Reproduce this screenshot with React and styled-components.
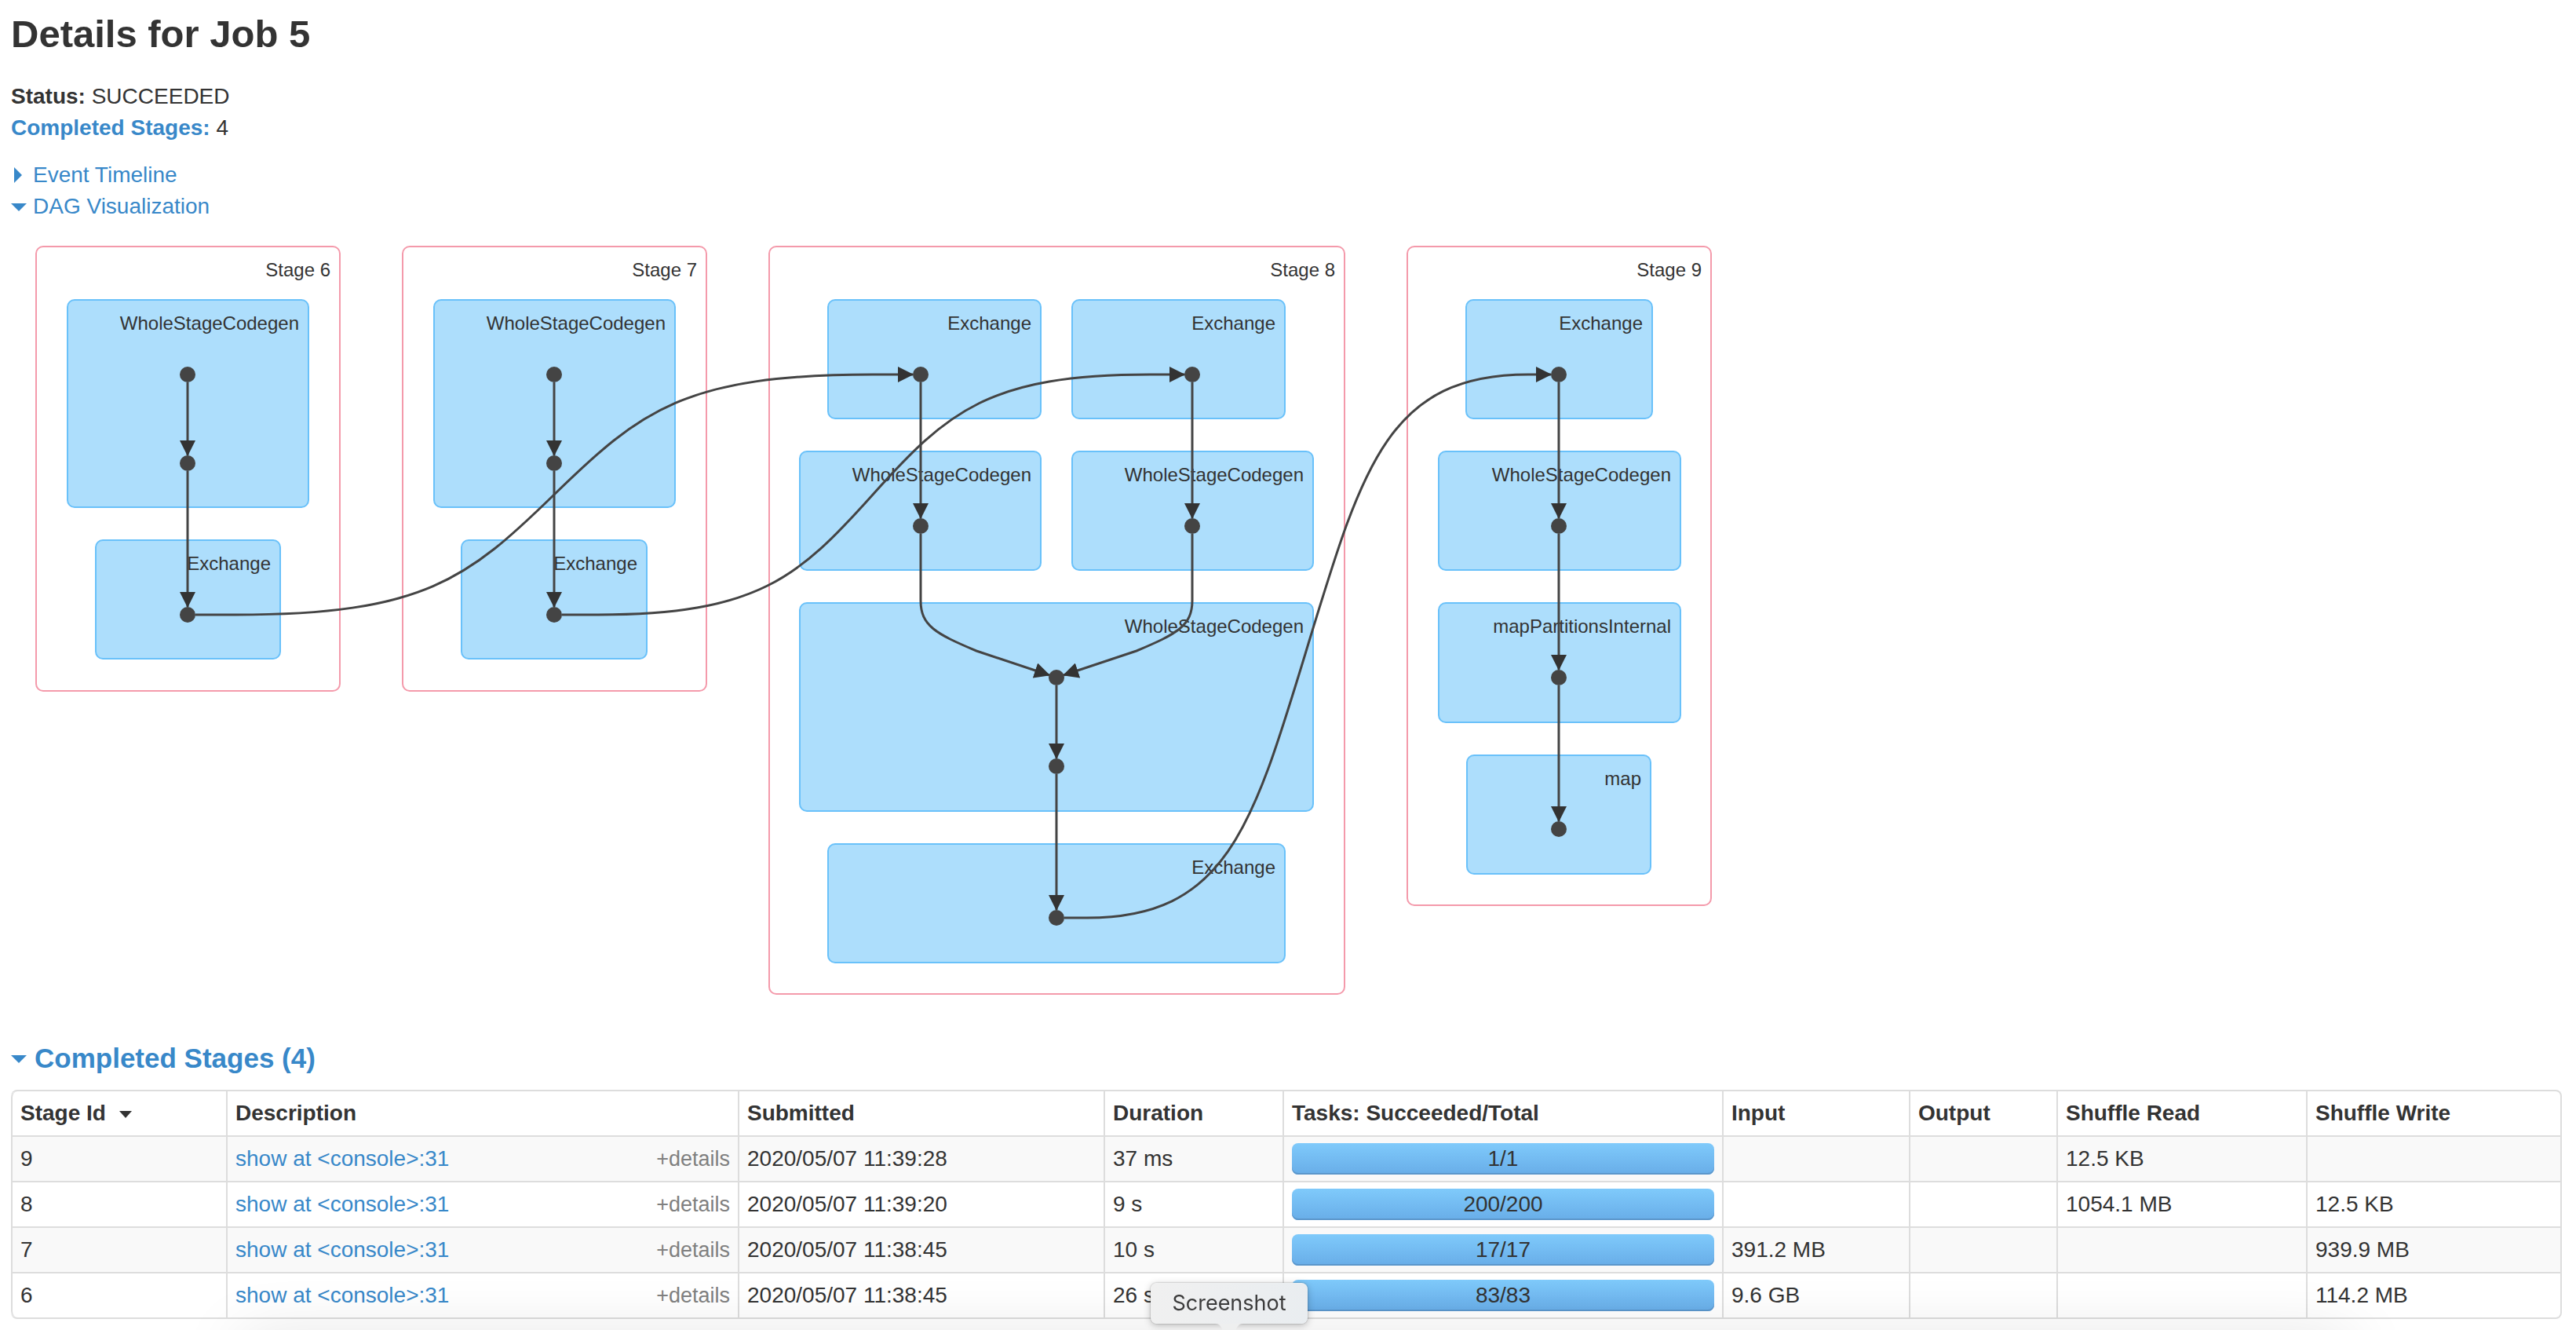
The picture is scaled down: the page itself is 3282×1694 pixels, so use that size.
import React from "react";
import styled, { createGlobalStyle } from "styled-components";

const GlobalStyle = createGlobalStyle`
  html { background: #fff; }
  body {
    margin: 0;
    color: #333;
    font: 28px/40px "Liberation Sans", Arial, sans-serif;
  }
`;

const LINK = "#3888c9";

const Page = styled.main`
  padding: 3px 18px 0 14px;
`;

const PageTitle = styled.h1`
  margin: 0 0 20px;
  font-size: 49px;
  line-height: 80px;
`;

const Summary = styled.ul`
  list-style: none;
  margin: 0 0 20px;
  padding: 0;
`;

const Link = styled.a`
  color: ${LINK};
  text-decoration: none;
`;

const Toggle = styled.button`
  display: flex;
  align-items: center;
  gap: ${(p) => (p.$wide ? 10 : 8)}px;
  padding: 0;
  border: 0;
  background: none;
  color: ${LINK};
  font: inherit;
  cursor: pointer;
`;

const CaretBox = styled.svg`
  display: block;
  flex: none;
  width: 20px;
  height: 20px;
  fill: currentColor;
`;

const Graph = styled.svg`
  display: block;
  margin-top: 29px;
`;

const StageBox = styled.rect`
  fill: #fff;
  stroke: #f49aab;
  stroke-width: 2px;
`;

const OperationBox = styled.rect`
  fill: #addefc;
  stroke: #69c1fa;
  stroke-width: 2px;
`;

const GraphLabel = styled.text`
  fill: #333;
  font-size: 24px;
  text-anchor: end;
`;

const Edge = styled.path`
  fill: none;
  stroke: #444;
  stroke-width: 3px;
`;

const Dot = styled.circle`
  fill: #444;
`;

const SectionTitle = styled.h2`
  margin: 61px 0 20px;
  font-size: 35px;
  line-height: 40px;
`;

const Table = styled.table`
  width: 100%;
  table-layout: fixed;
  border: 2px solid #ddd;
  border-left: 0;
  border-radius: 8px;
  border-collapse: separate;
  border-spacing: 0;

  thead th:first-child { border-top-left-radius: 8px; }
  tbody tr:last-child td:first-child { border-bottom-left-radius: 8px; }
  tbody tr:nth-child(odd) td { background: #f9f9f9; }
`;

const Column = styled.col`
  width: ${(p) => (p.$share * 100) / 3248}%;
`;

const HeadCell = styled.th`
  padding: 8px 10px;
  border-left: 2px solid #ddd;
  text-align: left;
  white-space: nowrap;
`;

const Cell = styled.td`
  padding: 8px 10px;
  border-left: 2px solid #ddd;
  border-top: 2px solid #ddd;
  white-space: nowrap;
`;

const SortArrow = styled.svg`
  width: 16px;
  height: 9px;
  margin-left: 17px;
  vertical-align: 3px;
  fill: currentColor;
`;

const Description = styled.div`
  display: flex;
  justify-content: space-between;
`;

const DetailsButton = styled.button`
  padding: 0;
  border: 0;
  background: none;
  color: #808080;
  font: inherit;
  font-size: 27px;
  cursor: pointer;
`;

const Progress = styled.div`
  height: 40px;
  border-radius: 8px;
  background: linear-gradient(#7fcafb, #68ade8);
  box-shadow: inset 0 -2px 0 #5b96cb;
  text-align: center;
`;

const DockShadow = styled.div`
  position: fixed;
  left: 300px;
  right: 280px;
  bottom: -60px;
  height: 50px;
  border-radius: 40px;
  box-shadow: 0 0 80px rgba(0, 0, 0, 0.13);
  pointer-events: none;
`;

const Tooltip = styled.div`
  position: fixed;
  left: calc(50% - 175px);
  bottom: 8px;
  width: 200px;
  border-radius: 8px;
  background: linear-gradient(100deg, #f0f0f0, #e9edf0);
  box-shadow: 0 0 2px rgba(0, 0, 0, 0.35), 0 2px 10px rgba(0, 0, 0, 0.25);
  color: #3c3c3c;
  font: 27px/52px Inter, "Liberation Sans", sans-serif;
  text-align: center;
`;

const TooltipTail = styled.svg`
  position: absolute;
  left: 80px;
  top: 100%;
  display: block;
`;

const Caret = ({ open }) => (
  <CaretBox viewBox="0 0 20 20" aria-hidden="true">
    <path d={open ? "M0 6H20L10 16Z" : "M4 0L14 10L4 20Z"} />
  </CaretBox>
);

// Graph geometry; each box is listed as left, top, right, bottom.
const stages = [
  {
    name: "Stage 6", box: [46, 314, 433, 880],
    operations: [
      ["WholeStageCodegen", 86, 382, 393, 646],
      ["Exchange", 122, 688, 357, 839],
    ],
  },
  {
    name: "Stage 7", box: [513, 314, 900, 880],
    operations: [
      ["WholeStageCodegen", 553, 382, 860, 646],
      ["Exchange", 588, 688, 824, 839],
    ],
  },
  {
    name: "Stage 8", box: [980, 314, 1713, 1266],
    operations: [
      ["Exchange", 1055, 382, 1326, 533],
      ["Exchange", 1366, 382, 1637, 533],
      ["WholeStageCodegen", 1019, 575, 1326, 726],
      ["WholeStageCodegen", 1366, 575, 1673, 726],
      ["WholeStageCodegen", 1019, 768, 1673, 1033],
      ["Exchange", 1055, 1075, 1637, 1226],
    ],
  },
  {
    name: "Stage 9", box: [1793, 314, 2180, 1153],
    operations: [
      ["Exchange", 1868, 382, 2105, 533],
      ["WholeStageCodegen", 1833, 575, 2141, 726],
      ["mapPartitionsInternal", 1833, 768, 2141, 920],
      ["map", 1869, 962, 2103, 1113],
    ],
  },
];

const dots = [
  [239, 477], [239, 590], [239, 783],
  [706, 477], [706, 590], [706, 783],
  [1173, 477], [1519, 477], [1173, 670], [1519, 670],
  [1346, 863], [1346, 976], [1346, 1169],
  [1986, 477], [1986, 670], [1986, 863], [1986, 1056],
];

const edges = [
  "M239 487V580", "M239 600V773",
  "M706 487V580", "M706 600V773",
  "M1173 487V660", "M1519 487V660",
  "M1173 680V765C1173 797 1192 807 1244 829L1337 860",
  "M1519 680V765C1519 797 1500 807 1448 829L1355 860",
  "M1346 873V966", "M1346 986V1159",
  "M1986 487V660", "M1986 680V853", "M1986 873V1046",
  "M249 783H300C540 783 596 737 706 630C816 523 872 477 1112 477H1163",
  "M716 783H760C965 783 1017 736 1112 630C1207 524 1260 477 1465 477H1509",
  "M1356 1169H1385C1563 1169 1596 1053 1666 823C1736 593 1769 477 1947 477H1976",
];

const Box = ({ as: Shape, label, box: [x1, y1, x2, y2] }) => (
  <>
    <Shape x={x1} y={y1} width={x2 - x1} height={y2 - y1} rx="9" />
    <GraphLabel x={x2 - 12} y={y1 + 38}>{label}</GraphLabel>
  </>
);

const DagGraph = () => (
  <Graph width="2170" height="955" viewBox="14 312 2170 955" role="img" aria-label="DAG Visualization">
    <defs>
      <marker id="arrow" viewBox="0 0 20 20" refX="19" refY="10" markerWidth="20" markerHeight="20" markerUnits="userSpaceOnUse" orient="auto">
        <path d="M0 0L20 10L0 20Z" fill="#333" />
      </marker>
    </defs>
    {stages.map((stage) => (
      <g key={stage.name}>
        <Box as={StageBox} label={stage.name} box={stage.box} />
        {stage.operations.map(([name, ...box]) => (
          <Box key={box.join()} as={OperationBox} label={name} box={box} />
        ))}
      </g>
    ))}
    {edges.map((d) => <Edge key={d} d={d} markerEnd="url(#arrow)" />)}
    {dots.map(([x, y]) => <Dot key={`${x},${y}`} cx={x} cy={y} r="10" />)}
  </Graph>
);

const columns = [
  ["Stage Id", 274], ["Description", 652], ["Submitted", 466],
  ["Duration", 228], ["Tasks: Succeeded/Total", 560], ["Input", 238],
  ["Output", 188], ["Shuffle Read", 318], ["Shuffle Write", 324],
];

const rows = [
  { id: 9, submitted: "2020/05/07 11:39:28", duration: "37 ms", tasks: "1/1", read: "12.5 KB" },
  { id: 8, submitted: "2020/05/07 11:39:20", duration: "9 s", tasks: "200/200", read: "1054.1 MB", write: "12.5 KB" },
  { id: 7, submitted: "2020/05/07 11:38:45", duration: "10 s", tasks: "17/17", input: "391.2 MB", write: "939.9 MB" },
  { id: 6, submitted: "2020/05/07 11:38:45", duration: "26 s", tasks: "83/83", input: "9.6 GB", write: "114.2 MB" },
];

export default function App() {
  return (
    <>
      <GlobalStyle />
      <Page>
        <PageTitle>Details for Job 5</PageTitle>
        <Summary>
          <li><strong>Status:</strong> SUCCEEDED</li>
          <li><Link href="#completed"><strong>Completed Stages:</strong></Link> 4</li>
        </Summary>
        <Toggle aria-expanded="false"><Caret />Event Timeline</Toggle>
        <Toggle aria-expanded="true"><Caret open />DAG Visualization</Toggle>
        <DagGraph />
        <SectionTitle id="completed">
          <Toggle $wide aria-expanded="true"><Caret open />Completed Stages (4)</Toggle>
        </SectionTitle>
        <Table>
          <colgroup>
            {columns.map(([name, share]) => <Column key={name} $share={share} />)}
          </colgroup>
          <thead>
            <tr>
              {columns.map(([name], i) => (
                <HeadCell key={name} scope="col">
                  {name}
                  {i === 0 && <SortArrow viewBox="0 0 16 9" aria-hidden="true"><path d="M0 0H16L8 9Z" /></SortArrow>}
                </HeadCell>
              ))}
            </tr>
          </thead>
          <tbody>
            {rows.map((row) => (
              <tr key={row.id}>
                <Cell>{row.id}</Cell>
                <Cell>
                  <Description>
                    <Link href="#stage">{"show at <console>:31"}</Link>
                    <DetailsButton>+details</DetailsButton>
                  </Description>
                </Cell>
                <Cell>{row.submitted}</Cell>
                <Cell>{row.duration}</Cell>
                <Cell><Progress>{row.tasks}</Progress></Cell>
                <Cell>{row.input}</Cell>
                <Cell>{row.output}</Cell>
                <Cell>{row.read}</Cell>
                <Cell>{row.write}</Cell>
              </tr>
            ))}
          </tbody>
        </Table>
      </Page>
      <DockShadow />
      <Tooltip role="tooltip">
        Screenshot
        <TooltipTail width="40" height="10" viewBox="0 0 40 10" aria-hidden="true">
          <path d="M2 0C9 0 10 5 13 10H27C30 5 31 0 38 0Z" fill="#eeefef" />
        </TooltipTail>
      </Tooltip>
    </>
  );
}
